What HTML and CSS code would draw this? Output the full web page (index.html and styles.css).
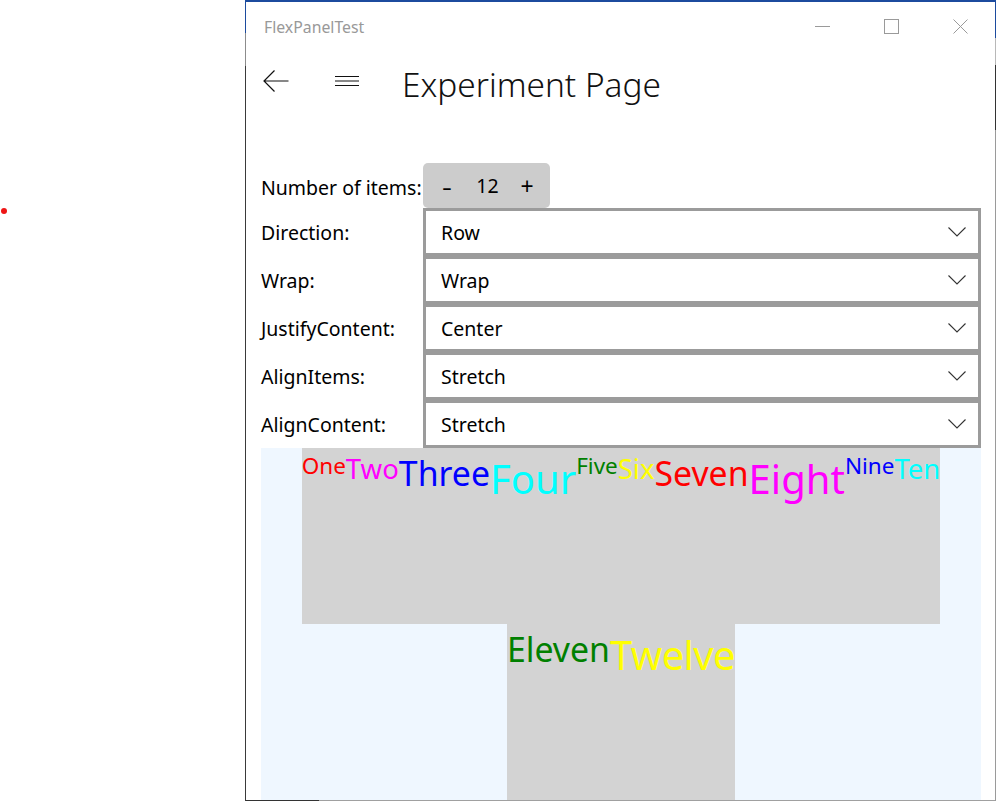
FILE: index.html
```html
<!DOCTYPE html>
<html lang="en">
<head>
<meta charset="utf-8">
<title>FlexPanelTest</title>
<link rel="stylesheet" href="styles.css">
</head>
<body>
<span class="dot"></span>
<div class="window">
  <div class="titlebar">
    <span class="app-title">FlexPanelTest</span>
    <div class="caption">
      <span class="cap-btn"><svg width="15" height="15" viewBox="0 0 15 15"><path d="M0 7.5H15" stroke="#9a9a9a" stroke-width="1" fill="none"/></svg></span>
      <span class="cap-btn"><svg width="15" height="15" viewBox="0 0 15 15"><rect x="0.5" y="0.5" width="14" height="14" stroke="#9a9a9a" stroke-width="1" fill="none"/></svg></span>
      <span class="cap-btn"><svg width="15" height="15" viewBox="0 0 15 15"><path d="M0.5 0.5L14.5 14.5M14.5 0.5L0.5 14.5" stroke="#9a9a9a" stroke-width="1" fill="none"/></svg></span>
    </div>
  </div>
  <div class="navbar">
    <span class="nav-btn back"><svg width="26" height="22" viewBox="0 0 26 22"><path d="M1 11H25.5M11.5 0.5L1 11L11.5 21.5" stroke="#111" stroke-width="1.2" fill="none"/></svg></span>
    <span class="nav-btn menu"><svg width="24" height="12" viewBox="0 0 24 12"><path d="M0 1.5H24M0 6H24M0 10.5H24" stroke="#111" stroke-width="1" fill="none"/></svg></span>
    <h1 class="page-title">Experiment Page</h1>
  </div>
  <div class="form">
    <span class="label">Number of items:</span>
    <div class="stepper"><span class="step minus">-</span><span class="count">12</span><span class="step plus">+</span></div>
    <span class="label">Direction:</span>
    <div class="combo"><span class="combo-text">Row</span><svg class="chev" width="18" height="10" viewBox="0 0 18 10"><path d="M0.5 0.5L9 9L17.5 0.5" stroke="#333" stroke-width="1.1" fill="none"/></svg></div>
    <span class="label">Wrap:</span>
    <div class="combo"><span class="combo-text">Wrap</span><svg class="chev" width="18" height="10" viewBox="0 0 18 10"><path d="M0.5 0.5L9 9L17.5 0.5" stroke="#333" stroke-width="1.1" fill="none"/></svg></div>
    <span class="label">JustifyContent:</span>
    <div class="combo"><span class="combo-text">Center</span><svg class="chev" width="18" height="10" viewBox="0 0 18 10"><path d="M0.5 0.5L9 9L17.5 0.5" stroke="#333" stroke-width="1.1" fill="none"/></svg></div>
    <span class="label">AlignItems:</span>
    <div class="combo"><span class="combo-text">Stretch</span><svg class="chev" width="18" height="10" viewBox="0 0 18 10"><path d="M0.5 0.5L9 9L17.5 0.5" stroke="#333" stroke-width="1.1" fill="none"/></svg></div>
    <span class="label">AlignContent:</span>
    <div class="combo"><span class="combo-text">Stretch</span><svg class="chev" width="18" height="10" viewBox="0 0 18 10"><path d="M0.5 0.5L9 9L17.5 0.5" stroke="#333" stroke-width="1.1" fill="none"/></svg></div>
  </div>
  <div class="flex-panel">
    <div class="item s1 red">One</div>
    <div class="item s2 magenta">Two</div>
    <div class="item s3 blue">Three</div>
    <div class="item s4 cyan">Four</div>
    <div class="item s1 green">Five</div>
    <div class="item s2 yellow">Six</div>
    <div class="item s3 red">Seven</div>
    <div class="item s4 magenta">Eight</div>
    <div class="item s1 blue">Nine</div>
    <div class="item s2 cyan">Ten</div>
    <div class="item s3 green">Eleven</div>
    <div class="item s4 yellow tw">Twelve</div>
  </div>
</div>
</body>
</html>
```

FILE: styles.css
```css
html, body {
  margin: 0;
  padding: 0;
}

body {
  width: 996px;
  height: 801px;
  overflow: hidden;
  position: relative;
  background: #fff;
  font-family: "Noto Sans", "Open Sans", sans-serif;
  color: #000;
}

.dot {
  position: absolute;
  left: 1px;
  top: 208px;
  width: 6px;
  height: 6px;
  border-radius: 50%;
  background: #ee1515;
}

.window {
  margin-left: 245px;
  width: 751px;
  height: 801px;
  box-sizing: border-box;
  padding: 2px 1px 1px 1px;
  overflow: hidden;
  background:
    linear-gradient(#1c4b9e, #1c4b9e) left top / 100% 2px no-repeat,
    linear-gradient(to bottom, #1c4b9e 0 33px, #8c8c8c 33px 66px, #3a3a3a 66px 100%) left top / 1px 100% no-repeat,
    linear-gradient(to bottom, #1c4b9e 0 38px, #b8b8b8 38px 65px, #333 65px 130px, #9a9a9a 130px 100%) right top / 1px 100% no-repeat,
    linear-gradient(to right, #333 0 74px, #a0a0a0 74px 100%) left bottom / 100% 1px no-repeat,
    #fff;
}

/* title bar */
.titlebar {
  height: 49px;
  display: flex;
  align-items: center;
}

.app-title {
  padding-left: 18px;
  font-size: 15.8px;
  color: #999;
  flex: 1;
}

.caption {
  display: flex;
  height: 100%;
}

.cap-btn {
  width: 69px;
  display: flex;
  align-items: center;
  justify-content: center;
}

.cap-btn svg {
  display: block;
}

/* nav bar */
.navbar {
  height: 60px;
  display: flex;
  align-items: center;
}

.nav-btn {
  display: flex;
  align-items: center;
}

.nav-btn svg {
  display: block;
}

.back {
  margin-left: 17px;
}

.menu {
  margin-left: 46px;
}

.page-title {
  margin: 0 0 0 43px;
  padding-top: 8px;
  font-size: 33.4px;
  font-weight: 300;
  color: #111;
  line-height: 1.3;
}

/* form */
.form {
  margin-top: 52px;
  margin-left: 15px;
  display: grid;
  grid-template-columns: 162px 558px;
  grid-template-rows: 45px repeat(5, 48px);
}

.label {
  align-self: center;
  font-size: 19.5px;
  white-space: nowrap;
}

.label:first-child {
  padding-top: 3px;
}

.stepper {
  width: 127px;
  height: 45px;
  background: #cccccc;
  border-radius: 5px;
  display: flex;
  align-items: center;
  font-size: 19.5px;
}

.step,
.count {
  text-align: center;
}

.minus {
  width: 48px;
  font-size: 22px;
  transform: scaleX(1.4);
}

.count {
  width: 33px;
}

.plus {
  width: 46px;
  font-size: 23px;
}

.combo {
  box-sizing: border-box;
  height: 48px;
  border: 3px solid #9b9b9b;
  background: #fff;
  display: flex;
  align-items: center;
  padding: 0 12px 0 15px;
}

.combo-text {
  flex: 1;
  font-size: 19.5px;
}

.chev {
  display: block;
  margin-top: -1px;
}

/* flex panel */
.flex-panel {
  margin-left: 15px;
  width: 720px;
  height: 352px;
  background: #eff7ff;
  display: flex;
  flex-direction: row;
  flex-wrap: wrap;
  justify-content: center;
  align-items: stretch;
  align-content: stretch;
}

.item {
  background: #d3d3d3;
  white-space: nowrap;
  line-height: normal;
  padding-top: 0.07em;
}

.s1 { font-size: 22.5px; }
.s2 { font-size: 27.5px; }
.s3 { font-size: 33.8px; }
.s4 { font-size: 40px; }

.tw { letter-spacing: -0.6px; }

.red { color: #ff0000; }
.magenta { color: #ff00ff; }
.blue { color: #0000ff; }
.cyan { color: #00ffff; }
.green { color: #008000; }
.yellow { color: #ffff00; }
```
